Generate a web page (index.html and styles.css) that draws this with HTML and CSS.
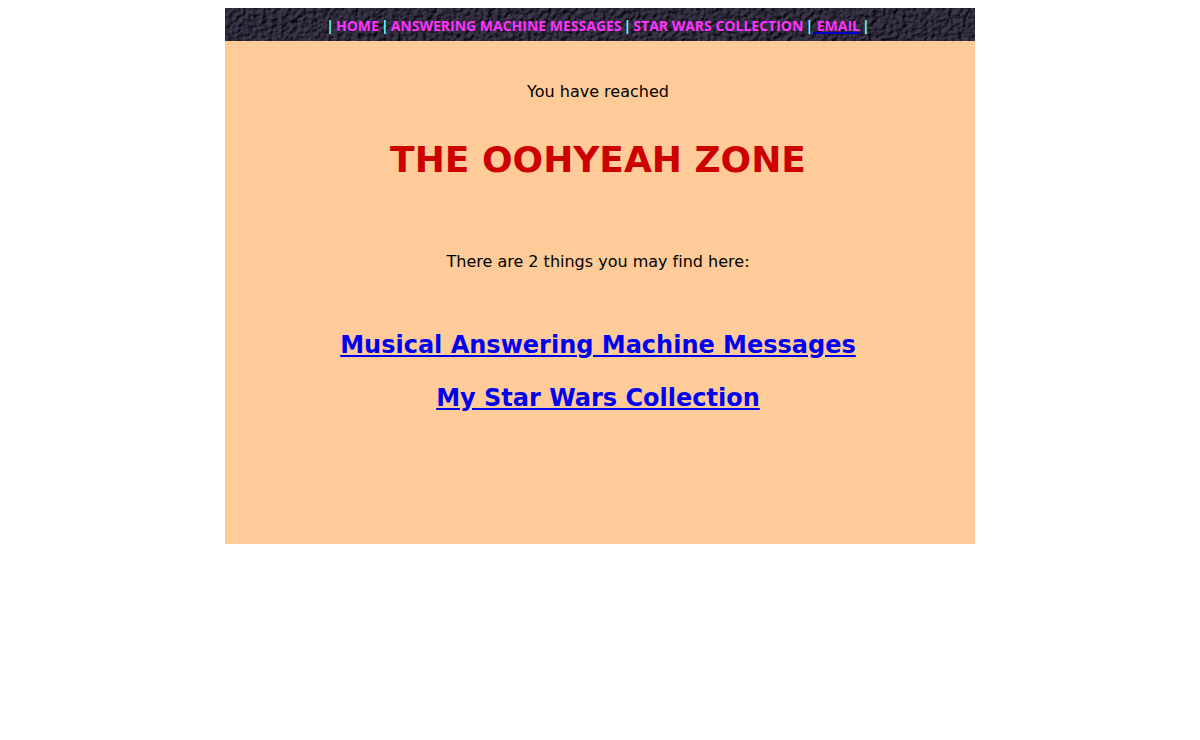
FILE: index.html
```html
<!DOCTYPE html>
<html lang="en">
<head>
    <meta charset="UTF-8">
    <meta name="viewport" content="width=device-width, initial-scale=1.0">
    <title>The OohYeah Zone</title>
    <link rel="stylesheet" href="styles.css">
</head>
<body>
    <div class="page">
        <nav class="navbar">
            <!-- dark stone texture -->
            <svg class="navbar-texture" aria-hidden="true">
                <filter id="stone" x="0" y="0" width="100%" height="100%" color-interpolation-filters="sRGB">
                    <feTurbulence type="fractalNoise" baseFrequency="0.2 0.22" numOctaves="3" seed="4" result="noise"/>
                    <feDiffuseLighting in="noise" lighting-color="#3a344a" surfaceScale="3" diffuseConstant="1.1">
                        <feDistantLight azimuth="225" elevation="48"/>
                    </feDiffuseLighting>
                </filter>
                <rect width="100%" height="100%" filter="url(#stone)"/>
            </svg>
            <div class="navbar-links">
                <span>|</span>
                <a href="#">HOME</a>
                <span>|</span>
                <a href="#">ANSWERING MACHINE MESSAGES</a>
                <span>|</span>
                <a href="#">STAR WARS COLLECTION</a>
                <span>|</span>
                <a href="#" class="email">&nbsp;<span>EMAIL</span></a>
                <span>|</span>
            </div>
        </nav>
        <main class="content">
            <p class="intro">You have reached</p>
            <h1>THE OOHYEAH ZONE</h1>
            <p class="things">There are 2 things you may find here:</p>
            <h2><a href="#">Musical Answering Machine Messages</a></h2>
            <h2><a href="#">My Star Wars Collection</a></h2>
        </main>
    </div>
</body>
</html>
```

FILE: styles.css
```css
body {
    margin: 8px;
    background-color: #ffffff;
    color: #000000;
    font-family: Verdana, "DejaVu Sans", sans-serif;
    font-size: 16px;
    font-variant-ligatures: none;
    line-height: 20px;
}
.page {
    max-width: 750px;
    margin: 0 auto;
    text-align: center;
}
.navbar {
    position: relative;
    padding: 9px 4px 6px 0;
    background-color: #2c253b;
}
.navbar-texture {
    position: absolute;
    top: 0;
    left: 0;
    width: 100%;
    height: 100%;
}
.navbar-links {
    position: relative;
    display: flex;
    flex-wrap: wrap;
    justify-content: center;
    color: #66ffff;
    font-family: "Segoe UI", "Open Sans", sans-serif;
    font-size: 14px;
    font-weight: bold;
    line-height: 18px;
}
.navbar-links a {
    margin: 0 2px;
    color: #ff33ff;
    text-decoration: none;
}
.navbar-links .email {
    margin-left: 0;
    color: #0000cc;
    text-decoration: underline;
    text-decoration-thickness: 2px;
    text-underline-offset: 1px;
}
.email span {
    color: #ff33ff;
}
.content {
    padding: 41px 4px 131px 0;
    background-color: #ffcc99;
}
p {
    margin: 0;
}
h1 {
    margin: 36px 0 70px;
    color: #cc0000;
    font-size: 36px;
    line-height: 44px;
}
.things {
    margin-bottom: 58px;
}
h2 {
    margin: 0;
    font-size: 24px;
    line-height: 30px;
}
h2 + h2 {
    margin-top: 23px;
}
h2 a {
    color: #0000ee;
}
```
